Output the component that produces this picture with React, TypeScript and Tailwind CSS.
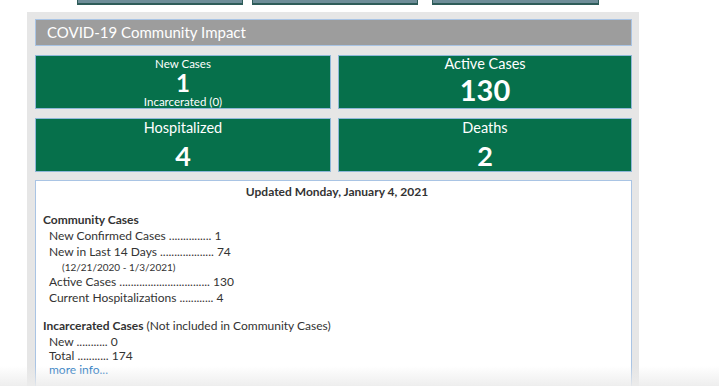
import React from "react";

const font = { fontFamily: "Lato, 'Open Sans', sans-serif" };

function Card({ children, top = false }: { children: React.ReactNode; top?: boolean }) {
  return (
    <div
      className={`flex h-[54px] flex-col items-center border border-[#8fb8d8] bg-[#06704b] text-white ${
        top ? "justify-start" : "justify-center"
      }`}
    >
      {children}
    </div>
  );
}

function Row({ label, dots, value, cls = "h-[16px] leading-[16px]" }: { label: string; dots: string; value: string; cls?: string }) {
  return (
    <div className={`pl-[6px] text-[12px] text-[#333] ${cls}`}>
      {label} {dots} {value}
    </div>
  );
}

export default function App() {
  return (
    <div className="relative h-[386px] w-[719px] overflow-hidden bg-white" style={font}>
      <div className="flex h-[12px] items-start">
        <div className="ml-[77px] h-[5px] w-[166px] border-x border-b-2 border-[#2e5c59] bg-[#6e8d98]" />
        <div className="ml-[9px] h-[5px] w-[166px] border-x border-b-2 border-[#2e5c59] bg-[#6e8d98]" />
        <div className="ml-[14px] h-[5px] w-[167px] border-x border-b-2 border-[#2e5c59] bg-[#6e8d98]" />
      </div>
      <div className="ml-[27px] h-[374px] w-[612px] bg-[#e6e6e6] pl-[8px] pr-[7px] pt-[7px]">
        <div className="flex h-[27px] items-center border border-[#a9c4e4] bg-[#9d9d9d] pl-[11px] text-[15px] text-white">
          COVID-19 Community Impact
        </div>
        <div className="mt-[9px] grid grid-cols-[296px_1fr] gap-x-[7px] gap-y-[9px]">
          <Card top>
            <div className="mt-[1px] text-[11.5px] leading-[13px]">New Cases</div>
            <div className="text-[24px] font-bold leading-[25px]">1</div>
            <div className="text-[11.5px] leading-[13px]">Incarcerated (0)</div>
          </Card>
          <Card top>
            <div className="text-[14.5px] leading-[15px]">Active Cases</div>
            <div className="text-[29px] font-bold leading-[38px]">130</div>
          </Card>
          <Card top>
            <div className="text-[14.5px] leading-[17px]">Hospitalized</div>
            <div className="text-[27px] font-bold leading-[40px]">4</div>
          </Card>
          <Card top>
            <div className="text-[14.5px] leading-[17px]">Deaths</div>
            <div className="text-[27px] font-bold leading-[40px]">2</div>
          </Card>
        </div>
        <div className="mt-[8px] h-[220px] border border-[#a9c4e4] bg-white pl-[7px] pt-[3px]">
          <div className="text-center text-[12px] font-bold leading-[16px] text-[#333]">
            Updated Monday, January 4, 2021
          </div>
          <div className="mt-[12px] h-[16px] text-[12px] font-bold leading-[16px] text-[#333]">Community Cases</div>
          <Row label="New Confirmed Cases" dots="..............." value="1" />
          <Row label="New in Last 14 Days" dots="..................." value="74" />
          <div className="h-[14px] pl-[19px] text-[10px] leading-[14px] text-[#333]">(12/21/2020 - 1/3/2021)</div>
          <Row label="Active Cases" dots="................................" value="130" />
          <Row label="Current Hospitalizations" dots="............" value="4" />
          <div className="mt-[12px] h-[16px] text-[12px] leading-[16px] text-[#333]">
            <span className="font-bold">Incarcerated Cases</span> (Not included in Community Cases)
          </div>
          <Row label="New" dots="..........." value="0" cls="h-[14px] leading-[14px] mt-[1px]" />
          <Row label="Total" dots="..........." value="174" cls="h-[14px] leading-[14px]" />
          <div className="h-[14px] pl-[6px] text-[12px] leading-[14px] text-[#1f78c1]">more info...</div>
        </div>
      </div>
      <div className="pointer-events-none absolute bottom-0 left-0 h-[20px] w-full bg-gradient-to-b from-transparent to-[#ececec]/90" />
    </div>
  );
}
